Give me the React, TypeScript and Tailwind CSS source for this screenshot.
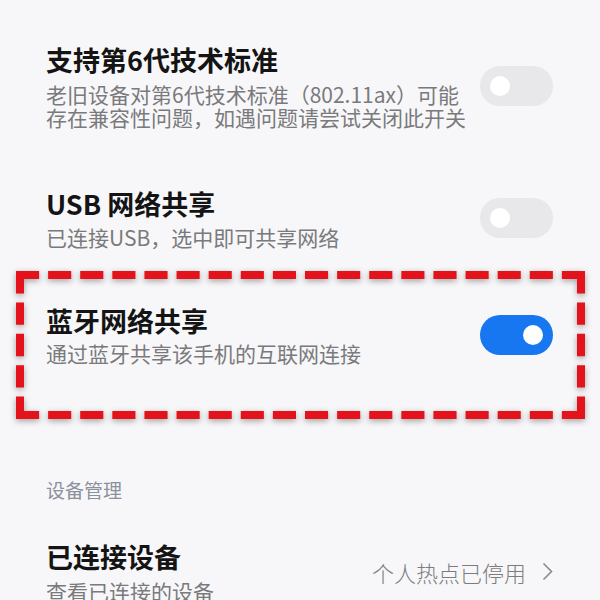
const font = 'font-["Noto_Sans_CJK_SC","Noto_Sans",sans-serif]'

type ToggleProps = { on?: boolean }

const Toggle = ({ on = false }: ToggleProps) => (
  <div
    className={`flex h-[40px] w-[73px] shrink-0 items-center rounded-full px-[10px] ${
      on ? 'justify-end bg-[#1677f0]' : 'justify-start bg-[#e8e8eb]'
    }`}
  >
    <div className="h-[20px] w-[20px] rounded-full bg-white" />
  </div>
)

const dashArray = (length: number, count: number, gap: number) => {
  const dash = (length - (count - 1) * gap) / count
  return `${dash} ${gap}`
}

const Highlight = () => {
  const w = 569
  const h = 148
  return (
    <svg
      width={w}
      height={h}
      className="pointer-events-none absolute left-[-30px] top-[-33px] drop-shadow-[0_2px_3px_rgba(0,0,0,0.35)]"
    >
      <g stroke="#e3121b" strokeWidth={8} fill="none">
        <line x1={0} y1={4} x2={w} y2={4} strokeDasharray={dashArray(w, 18, 9)} />
        <line x1={0} y1={h - 4} x2={w} y2={h - 4} strokeDasharray={dashArray(w, 18, 9)} />
        <line x1={4} y1={0} x2={4} y2={h} strokeDasharray={dashArray(h, 5, 9)} />
        <line x1={w - 4} y1={0} x2={w - 4} y2={h} strokeDasharray={dashArray(h, 5, 9)} />
      </g>
    </svg>
  )
}

const Title = ({ children }: { children: React.ReactNode }) => (
  <p className="text-[27px] font-semibold leading-[34px] text-[#141414]">{children}</p>
)

const Sub = ({ children }: { children: React.ReactNode }) => (
  <p className="text-[21px] leading-[23px] text-[#7a7a7c]">{children}</p>
)

export default function App() {
  return (
    <div className={`h-[600px] w-[600px] overflow-hidden bg-[#f7f7f9] pl-[46px] pr-[47px] pt-[43px] ${font}`}>
      <div className="flex items-center justify-between">
        <div>
          <Title>支持第6代技术标准</Title>
          <div className="mt-[6px]">
            <Sub>
              老旧设备对第6代技术标准（802.11ax）可能
              <br />
              存在兼容性问题，如遇问题请尝试关闭此开关
            </Sub>
          </div>
        </div>
        <Toggle />
      </div>

      <div className="mt-[58px] flex items-center justify-between">
        <div>
          <Title>USB 网络共享</Title>
          <div className="mt-[5px]">
            <Sub>已连接USB，选中即可共享网络</Sub>
          </div>
        </div>
        <Toggle />
      </div>

      <div className="relative mt-[55px] flex items-center justify-between">
        <Highlight />
        <div>
          <Title>蓝牙网络共享</Title>
          <div className="mt-[4px]">
            <Sub>通过蓝牙共享该手机的互联网连接</Sub>
          </div>
        </div>
        <Toggle on />
      </div>

      <p className="mt-[113px] text-[19px] leading-[24px] text-[#8a909c]">设备管理</p>

      <div className="mt-[38px] flex items-center justify-between">
        <div>
          <Title>已连接设备</Title>
          <div className="mt-[6px]">
            <Sub>查看已连接的设备</Sub>
          </div>
        </div>
        <div className="flex items-center gap-[16px]">
          <span className="text-[22px] font-light leading-[28px] text-[#7c7c7e]">个人热点已停用</span>
          <svg width="11" height="19" viewBox="0 0 11 19" fill="none">
            <path d="M1.5 1.5 L9.5 9.5 L1.5 17.5" stroke="#8a8a8c" strokeWidth="1.6" />
          </svg>
        </div>
      </div>
    </div>
  )
}
